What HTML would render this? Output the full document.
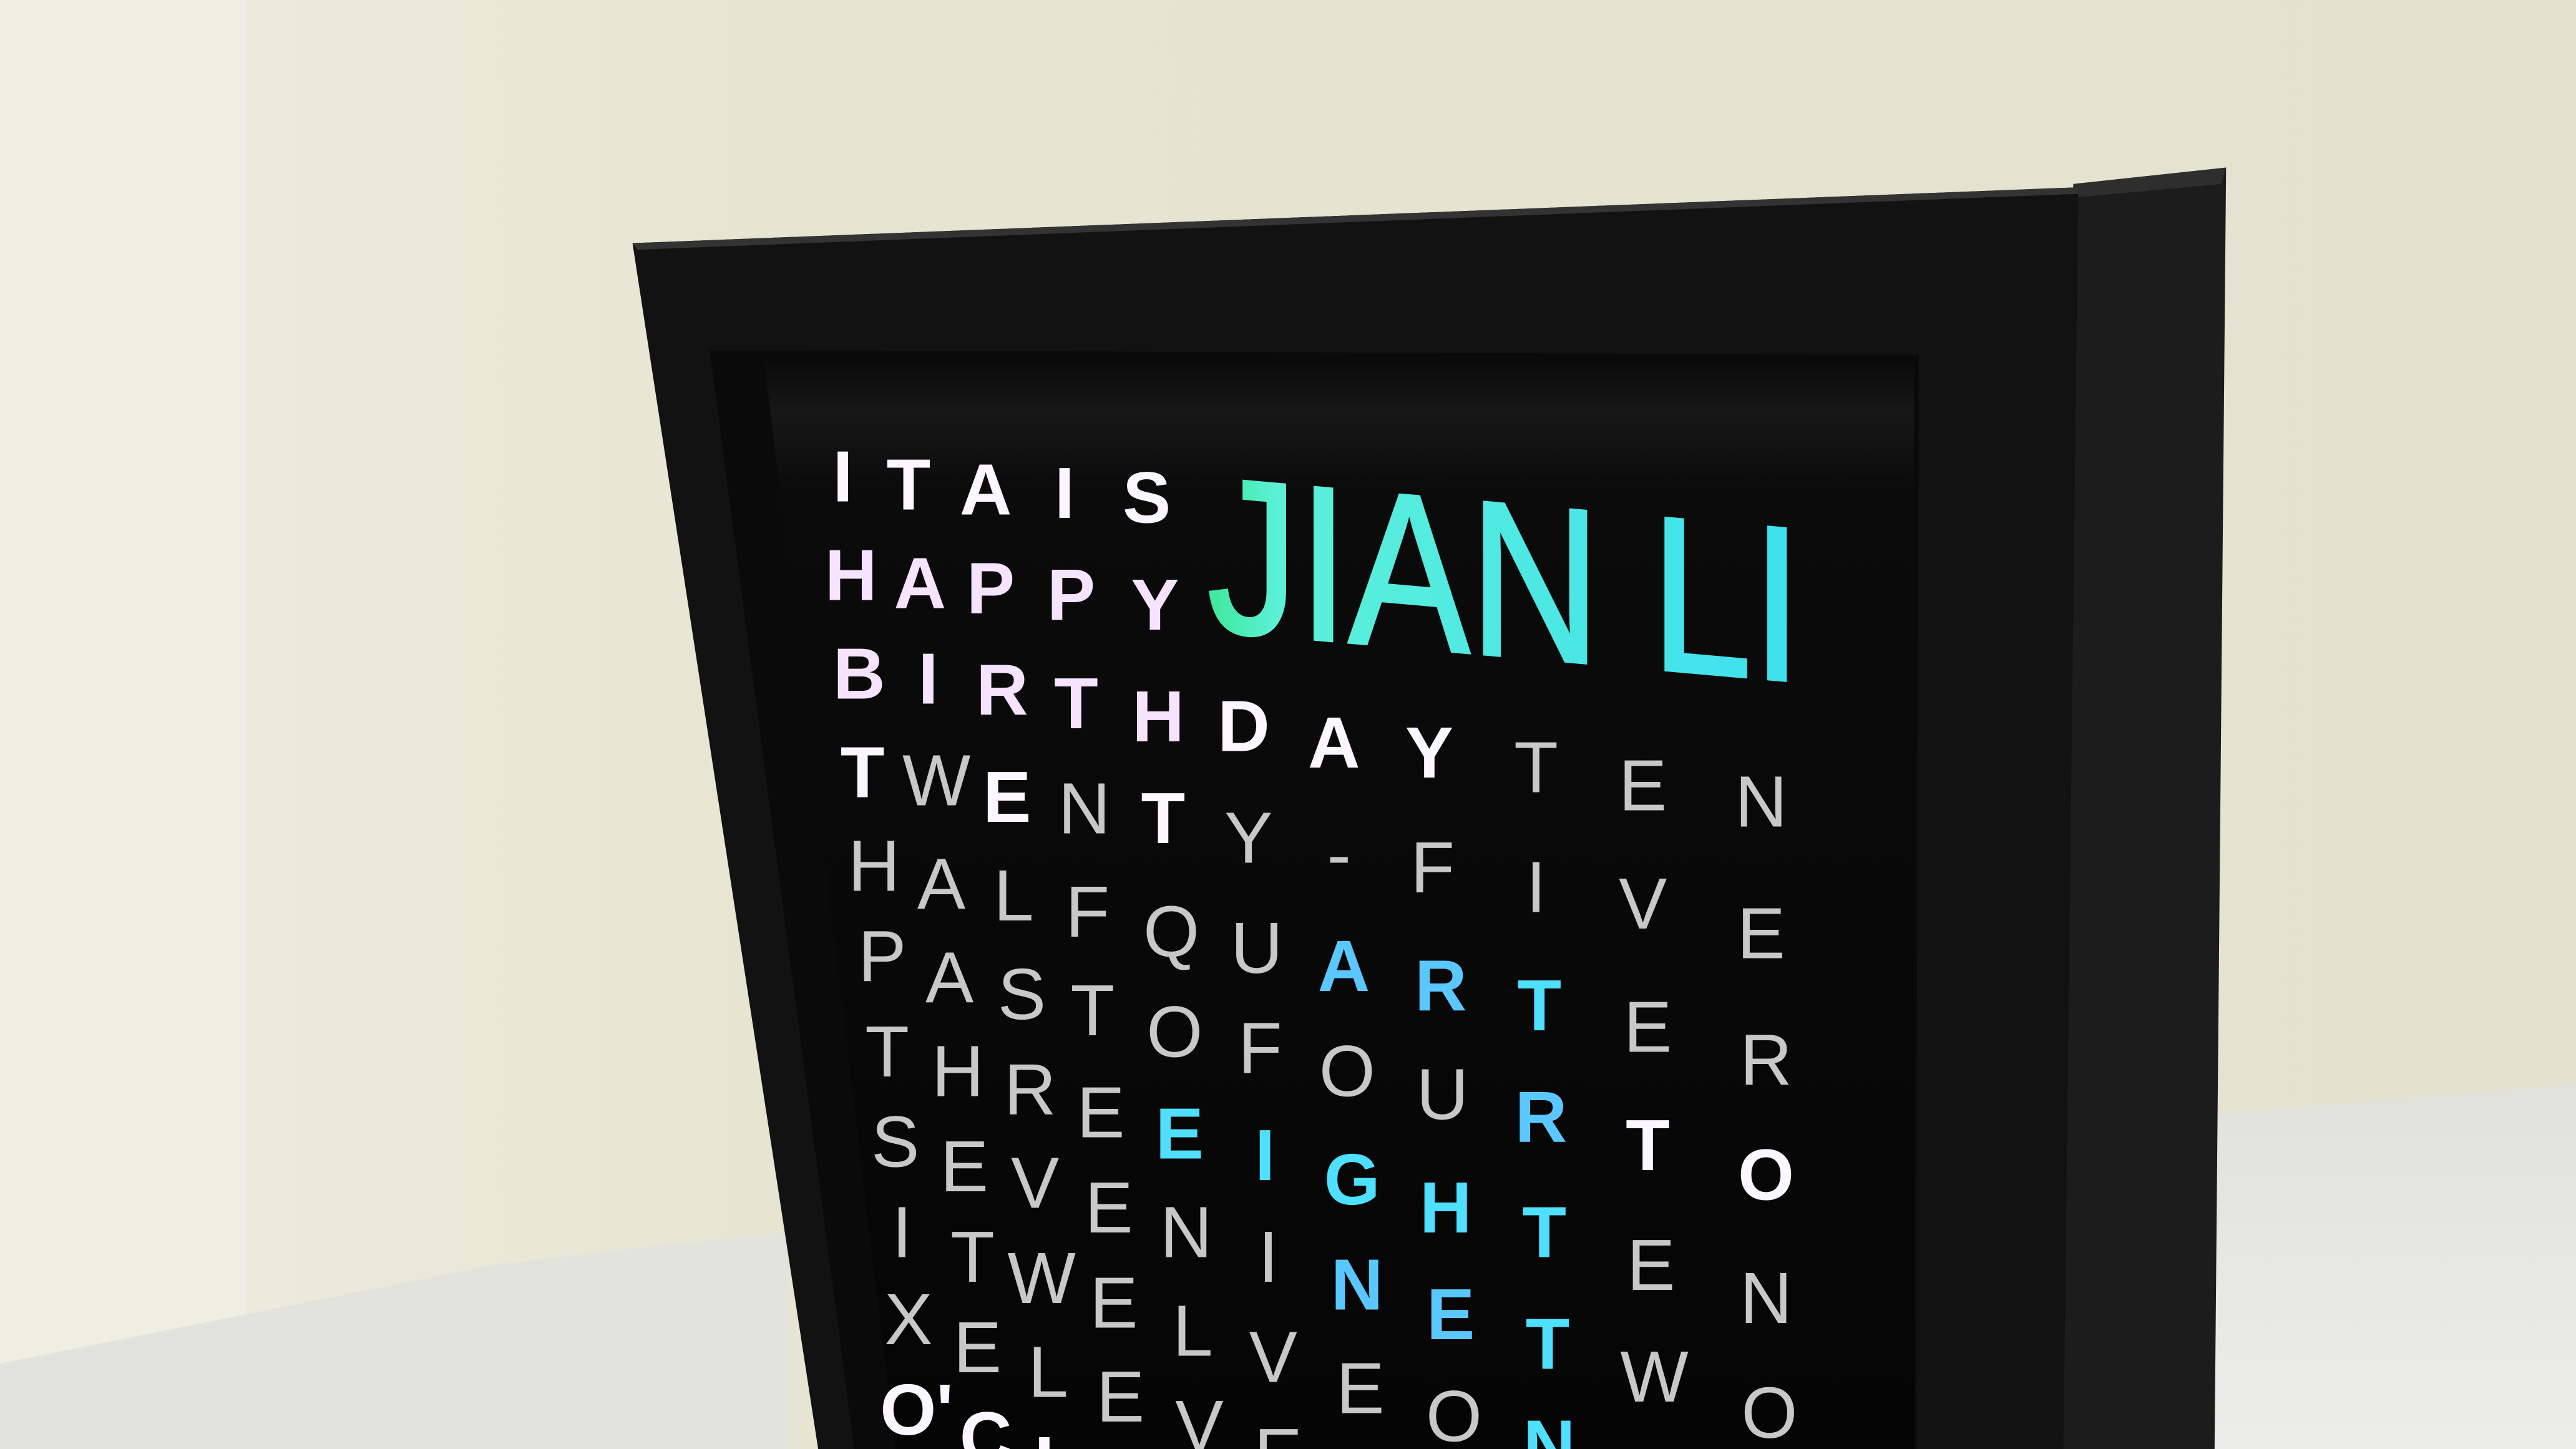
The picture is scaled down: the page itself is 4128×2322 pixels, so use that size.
<!DOCTYPE html>
<html><head><style>
html,body{margin:0;padding:0;width:4128px;height:2322px;overflow:hidden;background:#e6e4d2}
svg{display:block}
text{font-family:"Liberation Sans Narrow","Liberation Sans",sans-serif;text-anchor:middle;dominant-baseline:central}
text.jl{dominant-baseline:alphabetic;font-family:"Liberation Sans",sans-serif}
.u{fill:#c8c8c8}
.w{fill:#fbf6ff;font-weight:bold}
.p{fill:#f6e4ff;font-weight:bold}
.c{fill:#4fe0ff;font-weight:bold}
.b{fill:#5ac8ff;font-weight:bold}
</style></head><body>
<svg width="4128" height="2322" viewBox="0 0 1568 882" xmlns="http://www.w3.org/2000/svg">
<defs>
<linearGradient id="wall" x1="0" y1="0" x2="1" y2="0">
<stop offset="0" stop-color="#eeecdf"/><stop offset="0.3" stop-color="#e7e5d2"/><stop offset="1" stop-color="#e4e2cf"/>
</linearGradient>
<linearGradient id="tbl" x1="0" y1="0" x2="0" y2="1">
<stop offset="0" stop-color="#e2e2dc"/><stop offset="1" stop-color="#ececea"/>
</linearGradient>
<linearGradient id="glass" x1="0" y1="0" x2="0" y2="1">
<stop offset="0" stop-color="#0a0a0a"/><stop offset="0.05" stop-color="#171717"/><stop offset="0.12" stop-color="#0b0b0b"/><stop offset="1" stop-color="#050505"/>
</linearGradient>
<linearGradient id="jl" x1="0" y1="0" x2="1" y2="0">
<stop offset="0" stop-color="#3fe89a"/><stop offset="0.12" stop-color="#5cf0d8"/><stop offset="1" stop-color="#3ee0f0"/>
</linearGradient>
</defs>
<rect width="1568" height="882" fill="url(#wall)"/>
<rect x="0" y="0" width="150" height="882" fill="#efeee2"/>
<polygon points="0,830 300,770 385,760 480,750 480,882 0,882" fill="#e3e3de"/>
<polygon points="1330,680 1568,660 1568,882 1330,882" fill="url(#tbl)"/>
<polygon points="1262,112 1355,102 1348,882 1255,882" fill="#1c1c1c"/>
<polygon points="1262,112 1355,102 1352,112 1265,120" fill="#2e2e2e"/>
<polygon points="385,148 1265,114 1256,882 498,882" fill="#121212"/>
<polygon points="385,148 1265,114 1265,118 388,152" fill="#333"/>
<polygon points="432,213 1168,216 1166,882 520,882" fill="#0a0a0a"/>
<polygon points="465,218 1165,220 1165,882 545,882" fill="url(#glass)"/>
<g transform="skewY(5) translate(0,-81)">
<text class="jl" x="916" y="400" font-size="134" textLength="362" lengthAdjust="spacingAndGlyphs" fill="url(#jl)" stroke="url(#jl)" stroke-width="2">JIAN LI</text>
</g>
<g font-size="44">
<text class="w" x="513" y="290">I</text><text class="w" x="553" y="295">T</text><text class="w" x="600" y="298">A</text><text class="w" x="648" y="300">I</text><text class="w" x="698" y="303">S</text>
<text class="p" x="518" y="350">H</text><text class="p" x="560" y="355">A</text><text class="p" x="603" y="358">P</text><text class="p" x="652" y="362">P</text><text class="p" x="703" y="368">Y</text>
<text class="p" x="523" y="410">B</text><text class="p" x="565" y="413">I</text><text class="p" x="610" y="420">R</text><text class="p" x="655" y="428">T</text><text class="p" x="705" y="436">H</text><text class="w" x="757" y="442">D</text><text class="w" x="812" y="452">A</text><text class="w" x="870" y="458">Y</text><text class="u" x="935" y="467">T</text><text class="u" x="1000" y="478">E</text><text class="u" x="1072" y="488">N</text>
<text class="w" x="525" y="470">T</text><text class="u" x="570" y="475">W</text><text class="w" x="613" y="485">E</text><text class="u" x="660" y="492">N</text><text class="w" x="708" y="498">T</text><text class="u" x="760" y="510">Y</text><text class="u" x="815" y="520">-</text><text class="u" x="872" y="528">F</text><text class="u" x="935" y="540">I</text><text class="u" x="1000" y="550">V</text><text class="u" x="1072" y="568">E</text>
<text class="u" x="532" y="527">H</text><text class="u" x="573" y="538">A</text><text class="u" x="617" y="545">L</text><text class="u" x="662" y="555">F</text><text class="u" x="713" y="567">Q</text><text class="u" x="765" y="577">U</text><text class="b" x="818" y="588">A</text><text class="b" x="877" y="600">R</text><text class="c" x="937" y="612">T</text><text class="u" x="1003" y="625">E</text><text class="u" x="1075" y="645">R</text>
<text class="u" x="537" y="582">P</text><text class="u" x="578" y="595">A</text><text class="u" x="622" y="605">S</text><text class="u" x="665" y="615">T</text><text class="u" x="715" y="628">O</text><text class="u" x="767" y="638">F</text><text class="u" x="820" y="652">O</text><text class="u" x="878" y="666">U</text><text class="b" x="938" y="680">R</text><text class="w" x="1003" y="697">T</text><text class="w" x="1075" y="715">O</text>
<text class="u" x="540" y="640">T</text><text class="u" x="583" y="652">H</text><text class="u" x="627" y="663">R</text><text class="u" x="670" y="677">E</text><text class="c" x="718" y="690">E</text><text class="c" x="770" y="703">I</text><text class="c" x="823" y="718">G</text><text class="c" x="880" y="735">H</text><text class="c" x="940" y="750">T</text><text class="u" x="1005" y="770">E</text><text class="u" x="1075" y="790">N</text>
<text class="u" x="545" y="695">S</text><text class="u" x="587" y="710">E</text><text class="u" x="630" y="720">V</text><text class="u" x="675" y="735">E</text><text class="u" x="722" y="750">N</text><text class="u" x="772" y="765">I</text><text class="b" x="826" y="782">N</text><text class="b" x="883" y="800">E</text><text class="c" x="942" y="818">T</text><text class="u" x="1007" y="838">W</text><text class="u" x="1077" y="860">O</text>
<text class="u" x="549" y="750">I</text><text class="u" x="592" y="765">T</text><text class="u" x="634" y="778">W</text><text class="u" x="678" y="793">E</text><text class="u" x="726" y="810">L</text><text class="u" x="775" y="826">V</text><text class="u" x="828" y="845">E</text><text class="u" x="885" y="862">O</text><text class="c" x="943" y="880">N</text>
<text class="u" x="553" y="803">X</text><text class="u" x="595" y="820">E</text><text class="u" x="638" y="835">L</text><text class="u" x="682" y="850">E</text><text class="u" x="730" y="868">V</text><text class="u" x="778" y="885">E</text>
<text class="w" x="558" y="858">O'</text><text class="w" x="600" y="875">C</text><text class="w" x="643" y="890">L</text>
</g>
</svg>
</body></html>
